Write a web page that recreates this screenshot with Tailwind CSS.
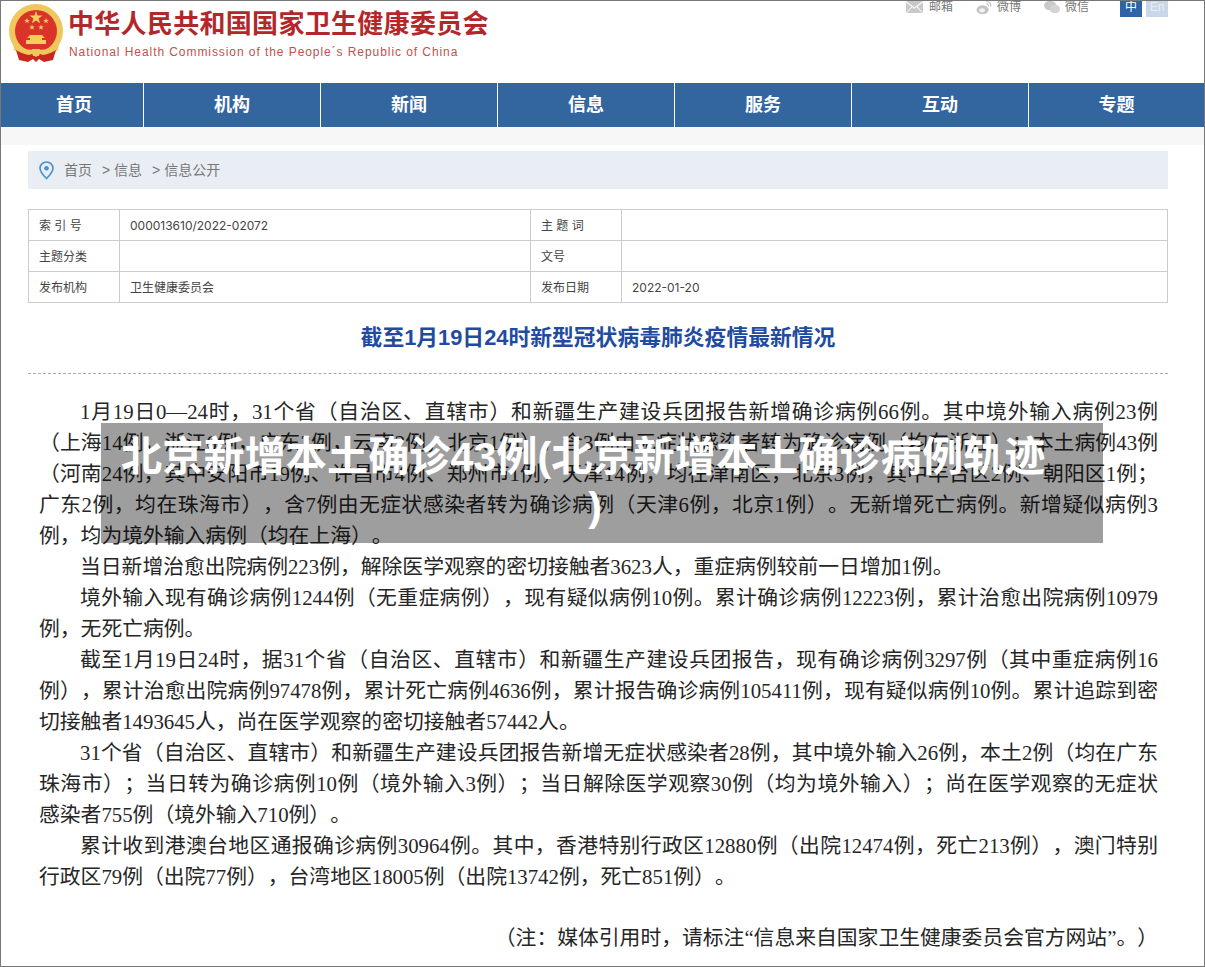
<!doctype html>
<html lang="zh">

<head>
    <meta charset="utf-8">
    <title>北京新增本土确诊43例</title>
    <script src="https://cdn.jsdelivr.net/npm/@tailwindcss/browser@4"></script>
</head>

<body class="bg-white font-['Liberation_Sans','Noto_Sans_CJK_SC',sans-serif]">
    <div class="relative w-[1205px] h-[967px] overflow-hidden border border-[#777] bg-white">

        <!-- header -->
        <header class="flex justify-between h-[82px]">
            <div class="flex pl-2 pt-[3px]">
                <svg class="w-[56px] h-[60px]" viewBox="0 0 56 60">
                    <circle cx="27" cy="27" r="27" fill="#f0c75a"/>
                    <circle cx="27" cy="27" r="21" fill="#d9332a"/>
                    <path d="M27 7l1.600 4.600h4.900l-3.900 3 1.400 4.700-4-2.800-4 2.800 1.400-4.700-3.900-3h4.900z" fill="#f4cf5c"/>
                    <path d="M18 14l.8 2h2l-1.600 1.300.6 2-1.800-1.200-1.800 1.200.6-2-1.600-1.300h2zM37 14l.8 2h2l-1.600 1.300.6 2-1.800-1.200-1.800 1.200.6-2-1.600-1.300h2zM23 20.500l.8 2h2l-1.600 1.300.6 2-1.800-1.200-1.800 1.200.6-2-1.600-1.300h2zM32 20.500l.8 2h2l-1.600 1.300.6 2-1.800-1.200-1.800 1.200.6-2-1.600-1.300h2z" fill="#f4cf5c"/>
                    <path d="M21 31h12l3 3h-3v2h4v4H17v-4h4v-2h-3z" fill="#f4cf5c"/>
                    <path d="M4 37c5 6 11 9 23 9s18-3 23-9l-1 9c-6 4-14 6-22 6s-16-2-22-6z" fill="#f0c75a"/>
                    <path d="M7 46c5 3 8 4 13 5l3-1 4 3 4-3 3 1c5-1 8-2 13-5l-3 10-9 2-5-3-3 3-3-3-5 3-9-2z" fill="#c8281f"/>
                    <path d="M23 45h8l-1 7h-6z" fill="#f0c75a"/>
                </svg>
                <div class="pl-[3px]">
                    <div class="text-[26px] leading-[30px] mt-[5px] font-bold text-[#b3272b] tracking-[0.3px]">中华人民共和国国家卫生健康委员会</div>
                    <div class="text-[12px] leading-[16px] mt-[5px] pl-px text-[#c2504d] tracking-[0.93px]">National Health Commission of the People´s Republic of China</div>
                </div>
            </div>
            <div class="flex items-start pr-9 text-[12px] leading-[14px] text-[#777]">
                <div class="flex items-start gap-[6px] -mt-px">
                    <svg class="w-[17px] h-[12px] mt-[1px]" viewBox="0 0 17 12"><path d="M0 0h17L8.500 6.500z" fill="#c9c9c9"/><path d="M0 1.500v10.500L5.500 5.500zM17 1.500V12L11.500 5.500zM.8 12l5.500-6 2.200 1.800L10.700 6l5.500 6z" fill="#c9c9c9"/></svg>
                    <span>邮箱</span>
                </div>
                <div class="flex items-start gap-[5px] -mt-px ml-[23px]">
                    <svg class="w-[16px] h-[15px]" viewBox="0 0 17 15"><ellipse cx="7" cy="10" rx="6.500" ry="4.800" fill="#c4c4c4"/><ellipse cx="6.500" cy="10.500" rx="3" ry="2.300" fill="#f2f2f2"/><path d="M11 1.500c3-.6 5.500 2 4.500 5M11 4c1.600-.3 2.500.8 2.200 2.200" fill="none" stroke="#c4c4c4" stroke-width="1.200"/></svg>
                    <span>微博</span>
                </div>
                <div class="flex items-start gap-[5px] -mt-px ml-[23px]">
                    <svg class="w-[16px] h-[14px]" viewBox="0 0 17 14"><ellipse cx="6.500" cy="5.500" rx="6.500" ry="5" fill="#c9c9c9"/><ellipse cx="11.500" cy="9" rx="5.500" ry="4.500" fill="#d4d4d4"/></svg>
                    <span>微信</span>
                </div>
                <div class="flex gap-1 ml-[31px] -mt-px">
                    <span class="w-[22px] h-[17px] bg-[#2f63a8] text-white text-center leading-[15px]">中</span>
                    <span class="w-[22px] h-[17px] bg-[#c9d8e8] text-[#e8eef5] text-center leading-[15px]">En</span>
                </div>
            </div>
        </header>

        <!-- main nav -->
        <nav class="grid grid-cols-[143px_repeat(5,177px)_1fr] h-[44px] bg-[#33659f] text-white text-[18px] font-bold leading-[44px] text-center">
            <a class="border-r border-white pl-1" href="#">首页</a>
            <a class="border-r border-white" href="#">机构</a>
            <a class="border-r border-white" href="#">新闻</a>
            <a class="border-r border-white" href="#">信息</a>
            <a class="border-r border-white" href="#">服务</a>
            <a class="border-r border-white" href="#">互动</a>
            <a href="#">专题</a>
        </nav>
        <div class="h-[18px] bg-[#f7f7f7]"></div>

        <main class="pl-[27px] pr-9">
            <!-- breadcrumb -->
            <div class="flex items-center h-[38px] mt-[6px] pl-[11px] bg-[#e9edf4] text-[14px] text-[#777]">
                <svg class="w-[15px] h-[19px] mr-[10px]" viewBox="0 0 15 19"><path d="M7.500 1C3.800 1 1 3.800 1 7.300c0 4 4 7.700 6.500 10.200C10 15 14 11.300 14 7.300 14 3.800 11.200 1 7.500 1z" fill="none" stroke="#4a90d2" stroke-width="1.600"/><circle cx="7.500" cy="7.300" r="2.300" fill="#4a90d2"/></svg>
                <span>首页</span>
                <span class="ml-[10px]">&gt; 信息</span>
                <span class="ml-[10px]">&gt; 信息公开</span>
            </div>

            <!-- meta table -->
            <div class="grid grid-cols-[91px_411px_91px_1fr] mt-5 border-t border-l border-[#ccc] text-[12px] leading-[32px] text-[#444]">
                <div class="h-[31px] pl-[10px] border-r border-b border-[#ccc]">索 引 号</div>
                <div class="h-[31px] pl-[10px] border-r border-b border-[#ccc] font-['Inter']">000013610/2022-02072</div>
                <div class="h-[31px] pl-[10px] border-r border-b border-[#ccc]">主 题 词</div>
                <div class="h-[31px] pl-[10px] border-r border-b border-[#ccc]"></div>
                <div class="h-[31px] pl-[10px] border-r border-b border-[#ccc]">主题分类</div>
                <div class="h-[31px] pl-[10px] border-r border-b border-[#ccc]"></div>
                <div class="h-[31px] pl-[10px] border-r border-b border-[#ccc]">文号</div>
                <div class="h-[31px] pl-[10px] border-r border-b border-[#ccc]"></div>
                <div class="h-[31px] pl-[10px] border-r border-b border-[#ccc]">发布机构</div>
                <div class="h-[31px] pl-[10px] border-r border-b border-[#ccc]">卫生健康委员会</div>
                <div class="h-[31px] pl-[10px] border-r border-b border-[#ccc]">发布日期</div>
                <div class="h-[31px] pl-[10px] border-r border-b border-[#ccc] font-['Inter']">2022-01-20</div>
            </div>

            <h1 class="mt-5 text-center text-[21.8px] leading-[30px] font-bold text-[#1f4ba0]">截至1月19日24时新型冠状病毒肺炎疫情最新情况</h1>
            <div class="mt-5 border-t border-dashed border-[#aaa]"></div>

            <article class="mt-[22px] pl-[11px] pr-[10px] font-['Liberation_Serif','Noto_Sans_CJK_SC',serif] text-[20.8px] leading-[31px] text-[#262626] whitespace-nowrap [text-spacing-trim:space-all]">
                <p class="pl-[41px] [text-align-last:justify]">1月19日0—24时，31个省（自治区、直辖市）和新疆生产建设兵团报告新增确诊病例66例。其中境外输入病例23例</p>
                <p class="[text-align-last:justify]">（上海14例，浙江6例，广东3例，云南2例，北京1例），含3例由无症状感染者转为确诊病例（均在浙江）；本土病例43例</p>
                <p class="[text-align-last:justify]">（河南24例，其中安阳市19例、许昌市4例、郑州市1例，天津14例，均在津南区，北京3例，其中丰台区2例、朝阳区1例；</p>
                <p class="[text-align-last:justify]">广东2例，均在珠海市），含7例由无症状感染者转为确诊病例（天津6例，北京1例）。无新增死亡病例。新增疑似病例3</p>
                <p>例，均为境外输入病例（均在上海）。</p>
                <p class="pl-[41px]">当日新增治愈出院病例223例，解除医学观察的密切接触者3623人，重症病例较前一日增加1例。</p>
                <p class="pl-[41px] [text-align-last:justify]">境外输入现有确诊病例1244例（无重症病例），现有疑似病例10例。累计确诊病例12223例，累计治愈出院病例10979</p>
                <p>例，无死亡病例。</p>
                <p class="pl-[41px] [text-align-last:justify]">截至1月19日24时，据31个省（自治区、直辖市）和新疆生产建设兵团报告，现有确诊病例3297例（其中重症病例16</p>
                <p class="[text-align-last:justify]">例），累计治愈出院病例97478例，累计死亡病例4636例，累计报告确诊病例105411例，现有疑似病例10例。累计追踪到密</p>
                <p>切接触者1493645人，尚在医学观察的密切接触者57442人。</p>
                <p class="pl-[41px] [text-align-last:justify]">31个省（自治区、直辖市）和新疆生产建设兵团报告新增无症状感染者28例，其中境外输入26例，本土2例（均在广东</p>
                <p class="[text-align-last:justify]">珠海市）；当日转为确诊病例10例（境外输入3例）；当日解除医学观察30例（均为境外输入）；尚在医学观察的无症状</p>
                <p>感染者755例（境外输入710例）。</p>
                <p class="pl-[41px] [text-align-last:justify]">累计收到港澳台地区通报确诊病例30964例。其中，香港特别行政区12880例（出院12474例，死亡213例），澳门特别</p>
                <p>行政区79例（出院77例），台湾地区18005例（出院13742例，死亡851例）。</p>
                <p class="mt-[30px] text-right">（注：媒体引用时，请标注“信息来自国家卫生健康委员会官方网站”。）</p>
            </article>
        </main>

        <!-- caption laid over the screenshot -->
        <div class="absolute left-[100px] top-[422px] w-[1002px] h-[120px] pt-[9px] bg-black/38 text-white text-[41.2px] font-bold leading-[50px]">
            <div class="pl-[20px] whitespace-nowrap">北京新增本土确诊43例(北京新增本土确诊病例轨迹</div>
            <div class="text-center pr-[14px]">)</div>
        </div>
    </div>
</body>
</html>
